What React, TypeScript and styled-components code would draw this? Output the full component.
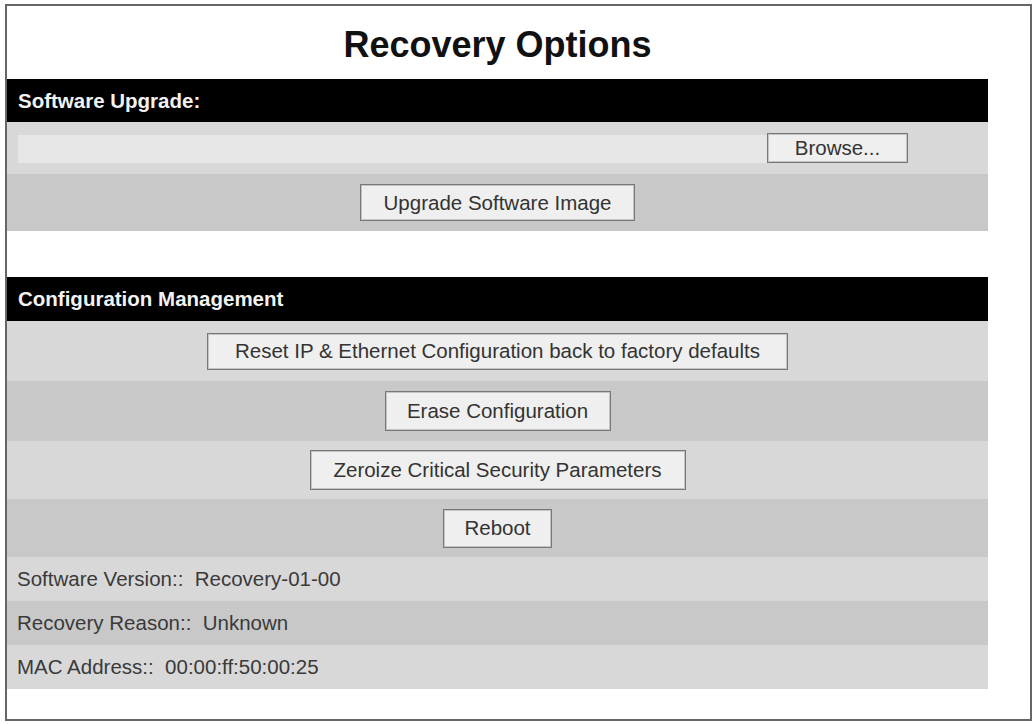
import React from "react";
import styled, { createGlobalStyle } from "styled-components";

const GlobalStyle = createGlobalStyle`
  html, body {
    margin: 0;
    padding: 0;
    background: #ffffff;
  }
  body {
    font-family: "Liberation Sans", Arial, sans-serif;
  }
`;

const Frame = styled.div`
  box-sizing: border-box;
  width: 1027px;
  height: 717px;
  margin: 4px 0 0 5px;
  border: 2px solid #666;
  background: #fff;
`;

const Panel = styled.div`
  width: 981px;
  display: flex;
  flex-direction: column;
`;

const Title = styled.h1`
  margin: 0;
  height: 73px;
  display: flex;
  align-items: center;
  justify-content: center;
  padding-top: 4px;
  box-sizing: border-box;
  font-size: 36px;
  font-weight: bold;
  color: #111;
`;

const SectionHeader = styled.div<{ $h: number }>`
  height: ${(p) => p.$h}px;
  background: #000;
  color: #f2f2f2;
  font-size: 20.5px;
  font-weight: bold;
  display: flex;
  align-items: center;
  padding-left: 11px;
`;

const Row = styled.div<{ $h: number; $dark?: boolean; $align?: string }>`
  height: ${(p) => p.$h}px;
  background: ${(p) => (p.$dark ? "#c8c8c8" : "#d8d8d8")};
  display: flex;
  align-items: center;
  justify-content: ${(p) => p.$align || "center"};
`;

const FileRow = styled(Row)`
  padding-left: 11px;
`;

const FileField = styled.div`
  width: 749px;
  height: 28px;
  margin-top: 2px;
  background: #e6e6e6;
`;

const Button = styled.button<{ $w: number; $h?: number }>`
  box-sizing: border-box;
  width: ${(p) => p.$w}px;
  height: ${(p) => p.$h || 38}px;
  padding: 0;
  background: #efefef;
  border: 1px solid #777;
  box-shadow: inset 0 0 0 1px #c4c4c4;
  font-family: "Liberation Sans", Arial, sans-serif;
  font-size: 20.5px;
  color: #333;
  cursor: pointer;
`;

const Gap = styled.div`
  height: 46px;
`;

const InfoRow = styled(Row)`
  padding-left: 10px;
  font-size: 20.5px;
  color: #3a3a3a;
  white-space: pre;
`;

const App = () => {
  return (
    <>
      <GlobalStyle />
      <Frame>
        <Panel>
          <Title>Recovery Options</Title>
          <SectionHeader $h={43}>Software Upgrade:</SectionHeader>
          <FileRow $h={52} $align="flex-start">
            <FileField />
            <Button $w={141} $h={30}>Browse...</Button>
          </FileRow>
          <Row $h={57} $dark>
            <Button $w={275} $h={37}>Upgrade Software Image</Button>
          </Row>
          <Gap />
          <SectionHeader $h={44}>Configuration Management</SectionHeader>
          <Row $h={60}>
            <Button $w={581} $h={37}>Reset IP &amp; Ethernet Configuration back to factory defaults</Button>
          </Row>
          <Row $h={60} $dark>
            <Button $w={226} $h={40}>Erase Configuration</Button>
          </Row>
          <Row $h={58}>
            <Button $w={376} $h={40}>Zeroize Critical Security Parameters</Button>
          </Row>
          <Row $h={58} $dark>
            <Button $w={109} $h={39}>Reboot</Button>
          </Row>
          <InfoRow $h={44} $align="flex-start">Software Version::  Recovery-01-00</InfoRow>
          <InfoRow $h={44} $dark $align="flex-start">Recovery Reason::  Unknown</InfoRow>
          <InfoRow $h={44} $align="flex-start">MAC Address::  00:00:ff:50:00:25</InfoRow>
        </Panel>
      </Frame>
    </>
  );
};

export default App;
